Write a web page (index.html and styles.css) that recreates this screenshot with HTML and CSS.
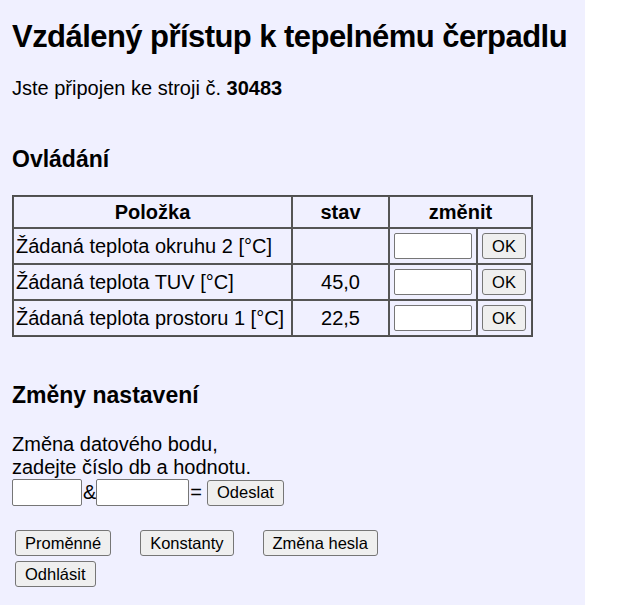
FILE: index.html
```html
<!DOCTYPE html>
<html lang="cs">
<head>
<meta charset="utf-8">
<title>Vzdálený přístup k tepelnému čerpadlu</title>
<link rel="stylesheet" href="styles.css">
</head>
<body>
<div class="page">
  <h1 class="title">Vzdálený přístup k tepelnému čerpadlu</h1>
  <p class="connected">Jste připojen ke stroji č. <b>30483</b></p>

  <h2 class="section">Ovládání</h2>
  <table class="grid">
    <tr>
      <th class="c-name">Položka</th>
      <th class="c-state">stav</th>
      <th colspan="2">změnit</th>
    </tr>
    <tr>
      <td>Žádaná teplota okruhu 2 [°C]</td>
      <td class="num"></td>
      <td class="c-in"><input class="val" type="text"></td>
      <td class="c-ok"><button class="btn ok">OK</button></td>
    </tr>
    <tr>
      <td>Žádaná teplota TUV [°C]</td>
      <td class="num">45,0</td>
      <td class="c-in"><input class="val" type="text"></td>
      <td class="c-ok"><button class="btn ok">OK</button></td>
    </tr>
    <tr>
      <td>Žádaná teplota prostoru 1 [°C]</td>
      <td class="num">22,5</td>
      <td class="c-in"><input class="val" type="text"></td>
      <td class="c-ok"><button class="btn ok">OK</button></td>
    </tr>
  </table>

  <h2 class="section section-2">Změny nastavení</h2>
  <p class="hint">Změna datového bodu,<br>zadejte číslo db a hodnotu.</p>
  <div class="dbrow">
    <input class="db" type="text"><span class="sym">&amp;</span><input class="dbval" type="text"><span class="sym">=</span><button class="btn send">Odeslat</button>
  </div>

  <div class="nav">
    <button class="btn nav-btn">Proměnné</button>
    <button class="btn nav-btn">Konstanty</button>
    <button class="btn nav-btn">Změna hesla</button>
    <button class="btn nav-btn">Odhlásit</button>
  </div>
</div>
</body>
</html>
```

FILE: styles.css
```css
html, body {
  margin: 0;
  padding: 0;
  background: #ffffff;
}
body {
  font-family: "Liberation Sans", Arial, sans-serif;
  color: #000;
}
.page {
  box-sizing: border-box;
  width: 585px;
  min-height: 605px;
  background: #f0f0ff;
  padding: 1px 12px 16px 12px;
}
.title {
  font-size: 31px;
  font-weight: bold;
  letter-spacing: -0.55px;
  margin: 18px 0 0 0;
  line-height: 36px;
  white-space: nowrap;
}
.connected {
  font-size: 20px;
  margin: 22px 0 0 0;
  line-height: 23px;
}
.section {
  font-size: 23px;
  font-weight: bold;
  margin: 46px 0 0 0;
  line-height: 27px;
}
.section-2 {
  margin-top: 45px;
}
.grid {
  margin-top: 22px;
  border-collapse: separate;
  border-spacing: 0;
  border: 1px solid #4d4d4d;
  font-size: 20px;
}
.grid th, .grid td {
  border: 1px solid #555;
  padding: 1px 2px;
  height: 32px;
}
.grid th {
  height: 28px;
  font-size: 20px;
}
.c-name { width: 273px; }
.c-state { width: 91px; }
.num { text-align: center; }
.grid .c-in { padding: 1px 4px; width: 78px; }
.grid .c-ok { padding: 1px 5px 1px 4px; width: 44px; }
.val {
  box-sizing: border-box;
  display: block;
  width: 78px;
  height: 26px;
  border: 1px solid #767676;
  border-radius: 2px;
  background: #fff;
  margin: 0;
}
.btn {
  font-family: "Liberation Sans", Arial, sans-serif;
  font-size: 16.5px;
  background: #efefef;
  border: 1px solid #767676;
  border-radius: 3px;
  padding: 2px 9px;
  height: 26px;
  color: #000;
  margin: 0;
}
.ok {
  display: block;
  width: 44px;
  padding: 2px 0;
}
.hint {
  font-size: 20px;
  line-height: 23px;
  margin: 24px 0 0 0;
}
.dbrow {
  display: flex;
  align-items: center;
  font-size: 20px;
  height: 27px;
}
.db, .dbval {
  box-sizing: border-box;
  height: 27px;
  border: 1px solid #767676;
  border-radius: 2px;
  background: #fff;
  margin: 0;
}
.db { width: 70px; }
.dbval { width: 93px; }
.sym { padding: 0 0 0 1px; }
.send { margin-left: 5px; }
.nav {
  display: flex;
  flex-wrap: wrap;
  column-gap: 29px;
  row-gap: 5px;
  margin-top: 24px;
  width: 420px;
  padding-left: 3px;
}
```
